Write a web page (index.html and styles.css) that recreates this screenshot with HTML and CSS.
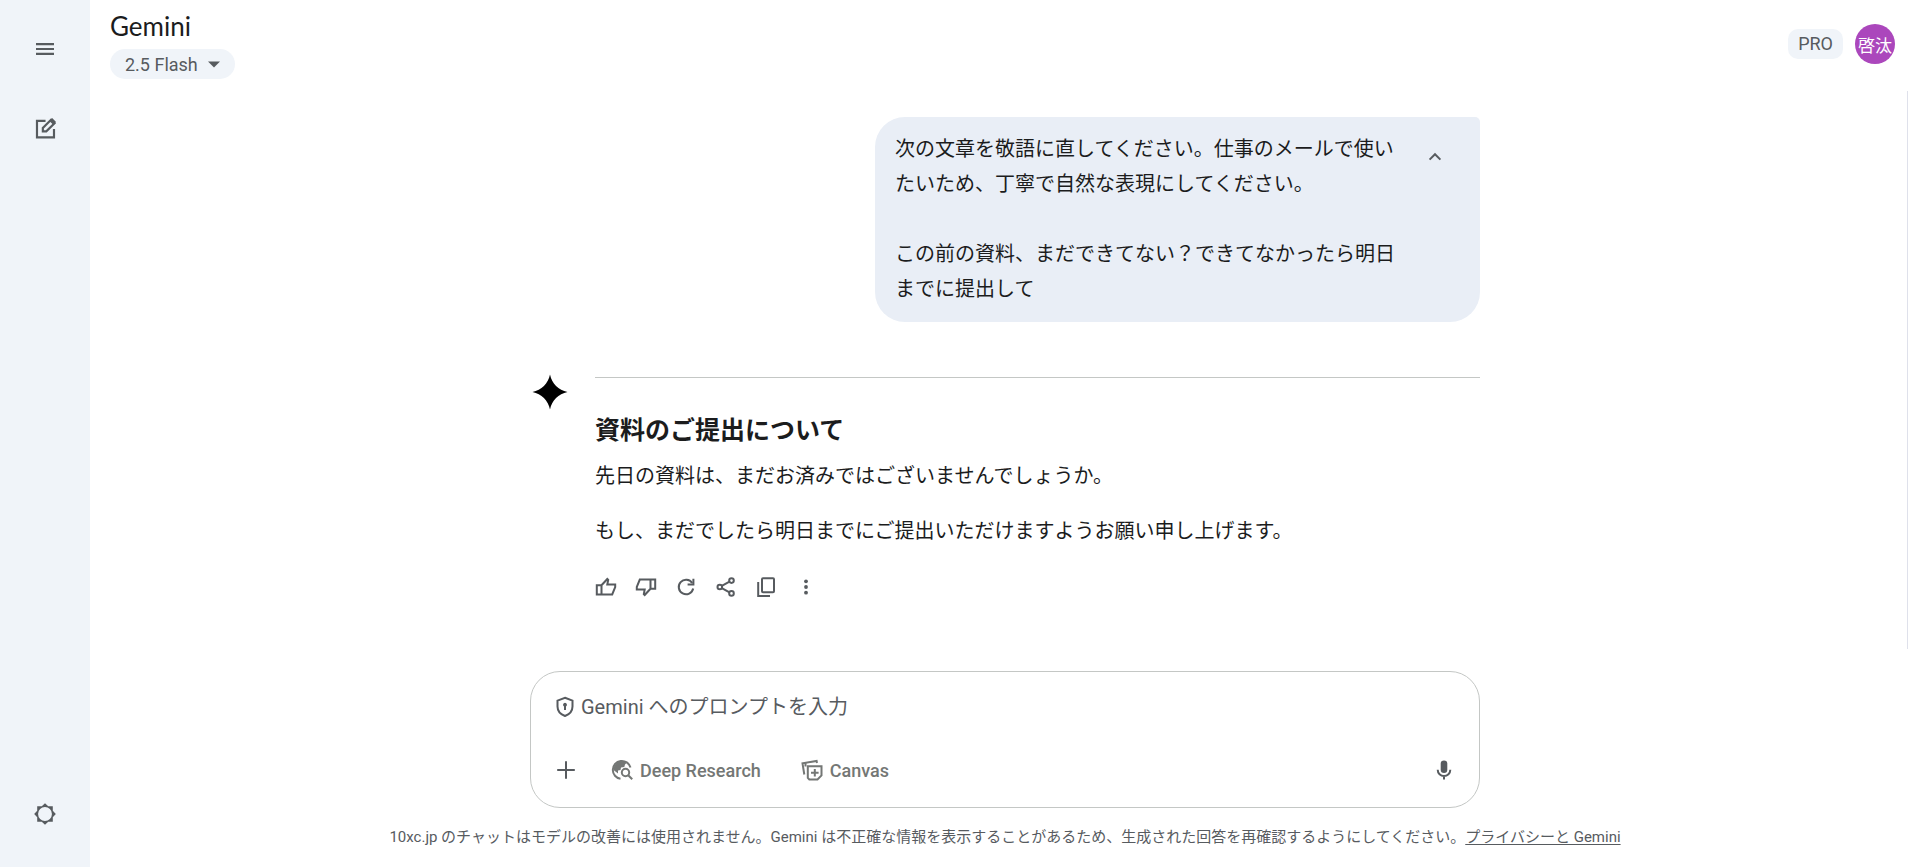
FILE: index.html
```html
<!DOCTYPE html>
<html lang="ja">
<head>
    <meta charset="UTF-8">
    <meta name="viewport" content="width=device-width, initial-scale=1.0">
    <title>Gemini</title>
    <link rel="stylesheet" href="styles.css">
</head>
<body>
    <nav class="sidebar">
        <button class="icon-btn" aria-label="メニュー">
            <svg viewBox="0 0 24 24"><path d="M3.7 7.500h16.600M3.700 12h16.600M3.700 16.500h16.600"/></svg>
        </button>
        <button class="icon-btn" aria-label="チャットを新規作成">
            <svg viewBox="0 0 24 24"><path d="M12.500 4.500H4.600v15.300h15.700V12"/><path d="M10 14.200v-3.200l7.600-7.600 3.200 3.200-7.600 7.600z"/><path d="M16 4.500l2.600-2.600 3.600 3.600-2.600 2.600z" class="fill"/></svg>
        </button>
        <button class="icon-btn settings" aria-label="設定">
            <svg viewBox="0 0 24 24"><path class="fill" fill-rule="evenodd" d="M12 2l3 2.800h4.200V9L22 12l-2.800 3v4.200H15L12 22l-3-2.800H4.800V15L2 12l2.800-3V4.800H9zM12 5.600a6.400 6.400 0 1 0 0 12.800a6.400 6.400 0 1 0 0-12.800z"/></svg>
        </button>
    </nav>

    <main class="main">
        <header class="header">
            <div>
                <h1>Gemini</h1>
                <button class="model-btn">2.5 Flash
                    <svg viewBox="0 0 12 7"><path d="M0 0.500h12L6 6.500z"/></svg>
                </button>
            </div>
            <div class="account">
                <span class="pro">PRO</span>
                <button class="avatar">啓汰</button>
            </div>
        </header>

        <section class="chat">
            <div class="column">
                <div class="question">
                    <p>次の文章を敬語に直してください。仕事のメールで使いたいため、丁寧で自然な表現にしてください。<br><br>この前の資料、まだできてない？できてなかったら明日までに提出して</p>
                    <button class="icon-btn" aria-label="折りたたむ">
                        <svg viewBox="0 0 24 24"><path d="M6.6 14.6L12 9.2l5.4 5.4"/></svg>
                    </button>
                </div>

                <div class="answer">
                    <svg class="spark" viewBox="0 0 36 36"><path d="M18 0.5C19.8 9.5 26.5 16.2 35.5 18C26.5 19.8 19.8 26.5 18 35.5C16.2 26.5 9.5 19.8 0.5 18C9.5 16.2 16.2 9.5 18 0.5z"/></svg>
                    <div class="answer-body">
                        <hr>
                        <h2>資料のご提出について</h2>
                        <p>先日の資料は、まだお済みではございませんでしょうか。</p>
                        <p>もし、まだでしたら明日までにご提出いただけますようお願い申し上げます。</p>
                        <div class="actions">
                            <button class="icon-btn" aria-label="良い回答">
                                <svg viewBox="0 0 24 24"><path d="M7.5 10.3L13.3 4l0.9 0.9-0.9 4.6h7.9v2.6l-3 7.4H2.8v-9.2h4.7v9.2"/></svg>
                            </button>
                            <button class="icon-btn" aria-label="悪い回答">
                                <svg viewBox="0 0 24 24"><path d="M16.5 13.7L10.7 20l-0.9-0.9 0.9-4.6H2.8v-2.6l3-7.4h15.4v9.2h-4.7V4.5"/></svg>
                            </button>
                            <button class="icon-btn" aria-label="やり直す">
                                <svg viewBox="0 0 24 24"><path d="M18.2 8A7.300 7.300 0 1 0 19.200 13.500"/><path d="M19.4 3.800v5.600h-5.800"/></svg>
                            </button>
                            <button class="icon-btn" aria-label="共有">
                                <svg viewBox="0 0 24 24"><circle cx="5.8" cy="12" r="2.3"/><circle cx="17.5" cy="5.6" r="2.3"/><circle cx="17.5" cy="18.4" r="2.3"/><path d="M7.8 10.9l7.7-4.2M7.8 13.1l7.7 4.2"/></svg>
                            </button>
                            <button class="icon-btn" aria-label="コピー">
                                <svg viewBox="0 0 24 24"><rect x="8" y="3.2" width="12" height="14" rx="1"/><path d="M4.2 7v14H16"/></svg>
                            </button>
                            <button class="icon-btn" aria-label="その他">
                                <svg viewBox="0 0 24 24" class="solid"><circle cx="12" cy="6.3" r="1.9"/><circle cx="12" cy="12" r="1.9"/><circle cx="12" cy="17.7" r="1.9"/></svg>
                            </button>
                        </div>
                    </div>
                </div>
            </div>
            <div class="scroll-thumb"></div>
        </section>

        <footer class="bottom">
            <form class="composer column">
                <div class="prompt">
                    <svg viewBox="0 0 24 24"><path d="M12 2.8l7.5 2.8v5.8c0 4.4-3 7.8-7.5 9.6-4.5-1.8-7.5-5.2-7.5-9.6V5.6z"/><path class="fill" d="M12 7.8a2 2 0 0 1 1 3.7V15h-2v-3.500a2 2 0 0 1 1-3.700z"/></svg>
                    <input type="text" placeholder="Gemini へのプロンプトを入力" aria-label="プロンプト">
                </div>
                <div class="tools">
                    <button type="button" class="icon-btn add" aria-label="追加">
                        <svg viewBox="0 0 24 24"><path d="M12 3.200v17.600M3.200 12h17.600"/></svg>
                    </button>
                    <button type="button" class="tool-btn">
                        <svg viewBox="0 0 24 24"><path d="M10.500 20.800A9 9 0 1 1 20.500 9.500"/><path class="fill" d="M3.500 10C4.500 6 8 3 12 3c2 0 3.500.5 5 1.500l-2 2-.7 2.500-3.300.5-.5 2.500-2.500.5v3L3.500 12z"/><circle cx="15.500" cy="14.500" r="3.700"/><path d="M18.200 17.200l4 4"/></svg>
                        Deep Research
                    </button>
                    <button type="button" class="tool-btn">
                        <svg viewBox="0 0 24 24"><path d="M17 5l-.4-2.100L2.500 5.300 4.300 16.500"/><path d="M5.500 8.500V5"/><path d="M7.800 8.200h13.700v9.200l-4 4h-8.200l-1.500-1.500z"/><path d="M14.800 11v7.600M11 14.800h7.600"/></svg>
                        Canvas
                    </button>
                    <button type="button" class="icon-btn mic" aria-label="マイク">
                        <svg viewBox="0 0 24 24"><rect class="fill" x="8.700" y="2.500" width="6.600" height="12.500" rx="3.300"/><path d="M5.700 11.800a6.300 6.300 0 0 0 12.600 0M12 18v3.500"/></svg>
                    </button>
                </div>
            </form>
            <p class="notice">10xc.jp のチャットはモデルの改善には使用されません。Gemini は不正確な情報を表示することがあるため、生成された回答を再確認するようにしてください。<a href="#">プライバシーと Gemini</a></p>
        </footer>
    </main>
</body>
</html>
```

FILE: styles.css
```css
* {
    box-sizing: border-box;
    margin: 0;
    padding: 0;
}

body {
    display: flex;
    min-height: 100vh;
    background: #fff;
    color: #1b1c1d;
    font-family: Roboto, "Noto Sans CJK JP", sans-serif;
    font-size: 20px;
    line-height: 35px;
}

button {
    border: none;
    background: none;
    font-family: inherit;
    color: inherit;
    cursor: pointer;
}

svg {
    flex: none;
    width: 24px;
    height: 24px;
    fill: none;
    stroke: #575b5f;
    stroke-width: 2;
}

svg .fill,
svg.solid {
    fill: #575b5f;
    stroke: none;
}

.icon-btn {
    display: flex;
    flex: none;
    align-items: center;
    justify-content: center;
    width: 40px;
    height: 40px;
    border-radius: 50%;
}

/* sidebar */
.sidebar {
    display: flex;
    flex: none;
    flex-direction: column;
    align-items: center;
    gap: 40px;
    width: 90px;
    padding: 29px 0 33px;
    background: #f0f4f9;
}

.sidebar svg {
    width: 26px;
    height: 26px;
}

.settings {
    margin-top: auto;
}

.main {
    display: flex;
    flex: 1;
    flex-direction: column;
    min-width: 0;
}

/* header */
.header {
    display: flex;
    justify-content: space-between;
    height: 91px;
    padding: 9px 13px 0 20px;
}

h1 {
    font-family: Lato, sans-serif;
    font-size: 26px;
    font-weight: 400;
    line-height: 35px;
}

.model-btn {
    display: flex;
    align-items: center;
    gap: 10px;
    height: 30px;
    margin-top: 5px;
    padding: 0 15px;
    border-radius: 15px;
    background: #f0f4f9;
    color: #575b5f;
    font-size: 18px;
    font-weight: 400;
}

.model-btn svg {
    width: 12px;
    height: 7px;
    fill: #575b5f;
    stroke: none;
}

.account {
    display: flex;
    align-items: center;
    gap: 12px;
    height: 70px;
}

.pro {
    padding: 0 10px;
    border-radius: 10px;
    background: #f0f4f9;
    color: #575b5f;
    font-size: 18px;
    line-height: 30px;
}

.avatar {
    width: 40px;
    height: 40px;
    border-radius: 50%;
    background: #ab47bc;
    color: #fff;
    font-size: 17px;
}

/* chat */
.chat {
    position: relative;
    flex: 1;
    padding: 26px 0 0 12px;
}

.column {
    width: 100%;
    max-width: 950px;
    margin: 0 auto;
}

.question {
    display: flex;
    gap: 20px;
    width: fit-content;
    max-width: 605px;
    margin-left: auto;
    padding: 15px 25px 15px 20px;
    border-radius: 30px 5px 30px 30px;
    background: #e9eef6;
}

.question .icon-btn {
    margin-top: 5px;
}

.answer {
    display: flex;
    gap: 27px;
    margin-top: 55px;
}

.spark {
    width: 36px;
    height: 36px;
    margin: -3px 0 0 2px;
    fill: #000;
    stroke: none;
}

.answer-body {
    flex: 1;
}

hr {
    margin-bottom: 35px;
    border: none;
    border-top: 1px solid #c4c7c5;
}

h2 {
    margin-bottom: 11px;
    font-size: 25px;
    font-weight: 700;
}

.answer-body p + p {
    margin-top: 20px;
}

.actions {
    display: flex;
    margin: 18px 0 0 -9px;
}

.scroll-thumb {
    position: absolute;
    top: 0;
    right: 0;
    bottom: 22px;
    width: 1px;
    background: #dfe1eb;
}

/* prompt box */
.bottom {
    padding: 0 0 20px 12px;
}

.composer {
    padding: 17px 15px 17px 22px;
    border: 1px solid #c4c7c5;
    border-radius: 30px;
}

.prompt {
    display: flex;
    align-items: center;
    gap: 4px;
    height: 36px;
    margin-bottom: 25px;
}

.prompt input {
    flex: 1;
    border: none;
    outline: none;
    font-family: inherit;
    font-size: 20px;
}

.prompt input::placeholder {
    color: #575b5f;
}

.tools {
    display: flex;
    align-items: center;
    gap: 9px;
}

.add {
    margin-left: -7px;
}

.tool-btn {
    display: flex;
    align-items: center;
    gap: 6px;
    height: 40px;
    padding: 0 15px;
    border-radius: 20px;
    color: #747775;
    font-size: 18px;
    font-weight: 500;
}

.tool-btn svg {
    stroke: #747775;
}

.tool-btn .fill {
    fill: #747775;
}

.mic {
    margin-left: auto;
}

.notice {
    margin-top: 19px;
    color: #575b5f;
    font-size: 15px;
    line-height: 20px;
    text-align: center;
}

.notice a {
    color: inherit;
    text-underline-offset: 2px;
}
```
